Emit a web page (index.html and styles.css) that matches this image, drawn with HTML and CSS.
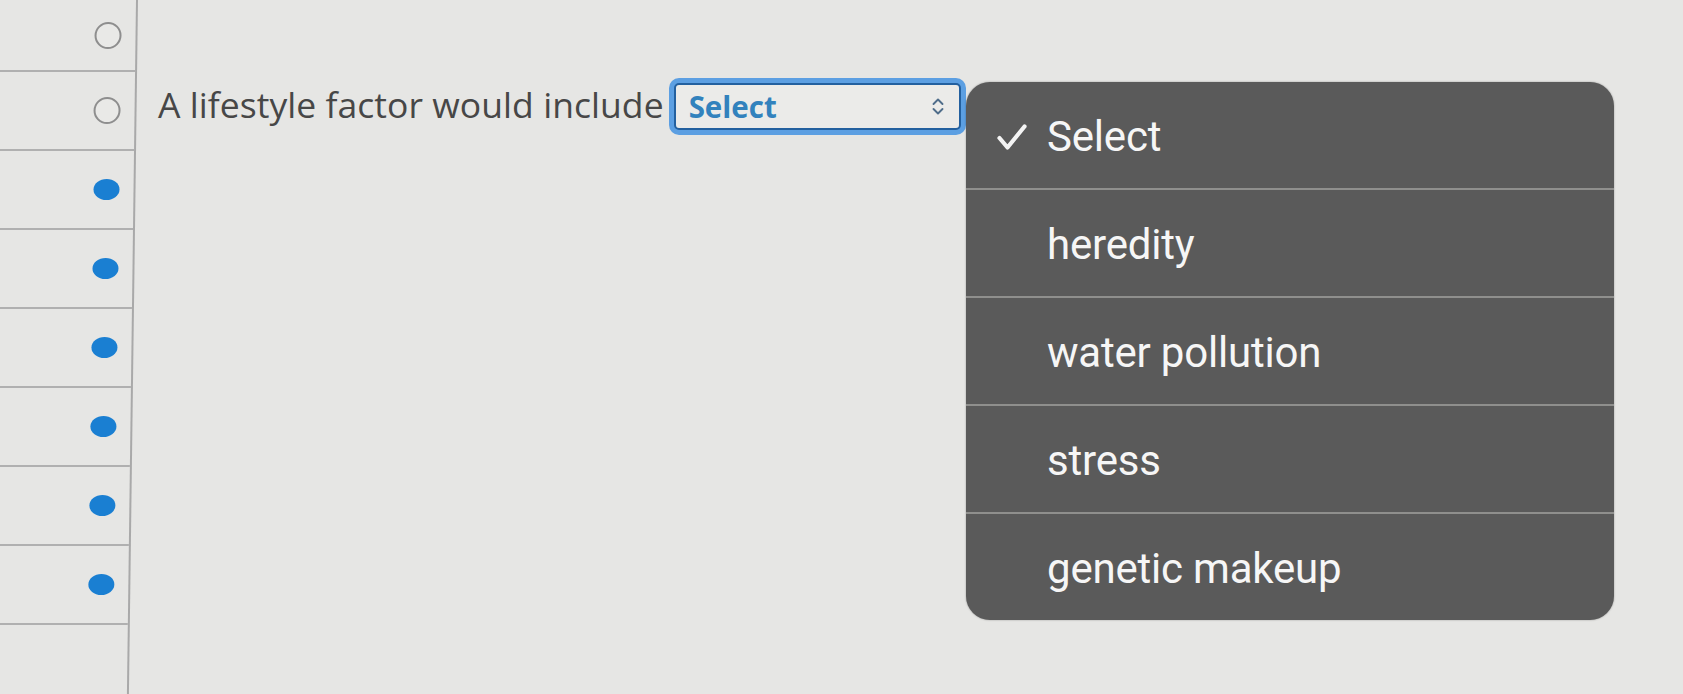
FILE: index.html
```html
<!DOCTYPE html>
<html lang="en">
<head>
<meta charset="utf-8">
<title>Lifestyle factor</title>
<link rel="stylesheet" href="styles.css">
</head>
<body>
<div class="page">
  <aside class="rail">
    <div class="rail-row first"><span class="ring"></span></div>
    <div class="rail-row"><span class="ring"></span></div>
    <div class="rail-row"><span class="dot"></span></div>
    <div class="rail-row"><span class="dot"></span></div>
    <div class="rail-row"><span class="dot"></span></div>
    <div class="rail-row"><span class="dot"></span></div>
    <div class="rail-row"><span class="dot"></span></div>
    <div class="rail-row"><span class="dot"></span></div>
  </aside>
  <main class="main">
    <div class="question">
      <span class="label">A lifestyle factor would include</span>
      <div class="select">
        <span class="select-text">Select</span>
        <svg class="chev" width="14" height="19" viewBox="0 0 14 19" aria-hidden="true">
          <polyline points="2.5,7 7,2.5 11.5,7" fill="none" stroke="#4f6d8a" stroke-width="1.9" stroke-linecap="round" stroke-linejoin="round"/>
          <polyline points="2.5,12 7,16.5 11.5,12" fill="none" stroke="#4f6d8a" stroke-width="1.9" stroke-linecap="round" stroke-linejoin="round"/>
        </svg>
      </div>
    </div>
  </main>
  <ul class="menu">
    <li class="item selected">
      <svg class="check" width="32" height="28" viewBox="0 0 32 28" aria-hidden="true">
        <path d="M3.5 15 L11.5 24.5 L28.5 3.5" fill="none" stroke="#f4f4f4" stroke-width="4.2" stroke-linecap="round" stroke-linejoin="round"/>
      </svg>
      <span>Select</span>
    </li>
    <li class="item"><span>heredity</span></li>
    <li class="item"><span>water pollution</span></li>
    <li class="item"><span>stress</span></li>
    <li class="item"><span>genetic makeup</span></li>
  </ul>
</div>
</body>
</html>
```

FILE: styles.css
```css
html, body {
  margin: 0;
  padding: 0;
}

body {
  background: #e6e6e4;
  width: 1683px;
  height: 694px;
  overflow: hidden;
}

.page {
  position: relative;
  display: flex;
  height: 694px;
}

.rail {
  width: 138px;
  flex: 0 0 138px;
  box-sizing: border-box;
  border-right: 2px solid #a9a9a9;
  display: flex;
  flex-direction: column;
  transform: skewX(-0.75deg);
  transform-origin: top left;
  height: 720px;
}

.rail-row {
  height: 79px;
  flex: 0 0 79px;
  box-sizing: border-box;
  border-bottom: 2px solid #b0b0b0;
  display: flex;
  align-items: center;
  justify-content: flex-end;
  padding-right: 14px;
}

.rail-row.first {
  height: 72px;
  flex-basis: 72px;
}

.ring {
  width: 23px;
  height: 23px;
  border: 2px solid #8e8e8e;
  border-radius: 50%;
  background: #e9e9e7;
}

.dot {
  width: 26px;
  height: 21px;
  border-radius: 50%;
  background: #1a7fd2;
}

.main {
  flex: 1;
  padding: 80px 0 0 20px;
}

.question {
  display: flex;
  align-items: baseline;
}

.label {
  font-family: "Open Sans", "Liberation Sans", sans-serif;
  font-size: 35.5px;
  letter-spacing: 0.05px;
  color: #474747;
}

.select {
  margin-left: 10px;
  width: 287px;
  height: 47px;
  box-sizing: border-box;
  border: 2px solid #23609f;
  border-radius: 5px;
  background: #ebebe9;
  box-shadow: 0 0 0 5px #5c9fe2;
  display: flex;
  align-items: center;
  justify-content: space-between;
  padding: 0 14px 0 13px;
}

.select-text {
  font-family: "Open Sans", "Liberation Sans", sans-serif;
  font-weight: 700;
  font-size: 29.5px;
  line-height: 43px;
  color: #3282bd;
}

.chev {
  display: block;
}

.menu {
  position: absolute;
  left: 966px;
  top: 82px;
  width: 648px;
  height: 538px;
  margin: 0;
  padding: 0;
  list-style: none;
  background: #5a5a5a;
  border-radius: 24px;
  overflow: hidden;
  box-shadow: 0 0 2px rgba(0, 0, 0, 0.35);
  display: flex;
  flex-direction: column;
}

.item {
  position: relative;
  flex: 1;
  display: flex;
  align-items: center;
  padding-left: 81px;
  font-family: Roboto, "Liberation Sans", sans-serif;
  font-size: 42px;
  color: #f6f6f6;
  border-bottom: 2px solid #8f8f8d;
  letter-spacing: -0.2px;
}

.item:last-child {
  border-bottom: none;
}

.item span {
  position: relative;
  top: 1px;
}

.check {
  position: absolute;
  left: 30px;
  top: 41px;
}
```
